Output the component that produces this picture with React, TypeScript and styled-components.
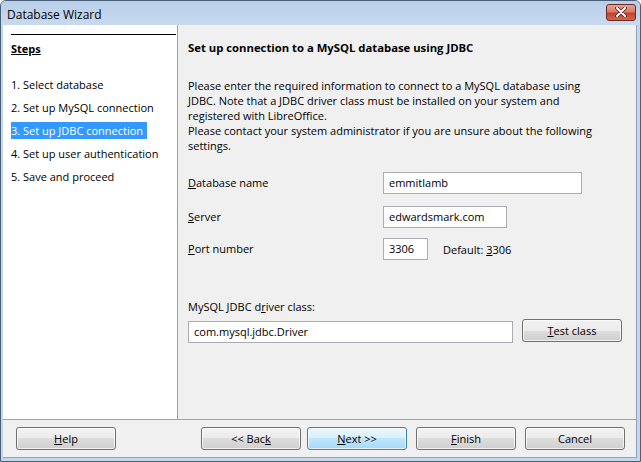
import React from 'react';
import styled, { createGlobalStyle } from 'styled-components';

const GlobalStyle = createGlobalStyle`
  html, body {
    margin: 0;
    padding: 0;
    background: #ffffff;
  }
  body {
    font-family: 'Open Sans', 'Noto Sans', sans-serif;
    font-size: 11px;
    color: #000000;
  }
`;

const Window = styled.div`
  width: 641px;
  height: 462px;
  box-sizing: border-box;
  border: 1px solid #4a5f78;
  border-radius: 6px 6px 0 0;
  background: #c3d7ed;
  display: flex;
  flex-direction: column;
  overflow: hidden;
`;

const TitleBar = styled.div`
  height: 24px;
  flex: none;
  display: flex;
  align-items: center;
  padding: 0 4px 0 6px;
  background: linear-gradient(#b8cfe9, #c7daef);
`;

const Title = styled.div`
  flex: 1;
  font-size: 12px;
  color: #000000;
  padding-top: 2px;
`;

const CloseButton = styled.div`
  width: 30px;
  height: 17px;
  margin-top: -2px;
  box-sizing: border-box;
  border: 1px solid #6b2b25;
  border-radius: 3px;
  background: linear-gradient(#e6a393 0%, #d97a66 45%, #c3432d 55%, #d0654c 100%);
  display: flex;
  align-items: center;
  justify-content: center;
`;

const Client = styled.div`
  flex: 1;
  margin: 0 3px 3px 2px;
  background: #f0f0f0;
  display: flex;
  flex-direction: column;
  border-right: 1px solid #8ea3bc;
  border-bottom: 1px solid #8ea3bc;
`;

const Main = styled.div`
  height: 394px;
  flex: none;
  display: flex;
  border-bottom: 1px solid #a0a0a0;
`;

const Sidebar = styled.div`
  width: 175px;
  flex: none;
  background: #ffffff;
  border-right: 1px solid #a0a0a0;
  padding: 9px 0 0 8px;
  box-sizing: border-box;
`;

const StepsHeader = styled.div`
  border-top: 1px solid #000000;
  margin-right: 1px;
  padding-top: 6px;
  font-weight: 700;
  text-decoration: underline;
  line-height: 16px;
`;

const StepList = styled.div`
  margin-top: 19px;
  display: flex;
  flex-direction: column;
  gap: 6px;
`;

const StepItem = styled.div<{ $active?: boolean }>`
  align-self: flex-start;
  line-height: 17px;
  height: 17px;
  white-space: nowrap;
  padding-right: 4px;
  background: ${p => (p.$active ? '#3399ff' : 'transparent')};
  color: ${p => (p.$active ? '#ffffff' : '#000000')};
`;

const Content = styled.div`
  flex: 1;
  padding: 15px 0 0 10px;
  display: flex;
  flex-direction: column;
`;

const Heading = styled.div`
  font-weight: 700;
  font-size: 11.3px;
  line-height: 16px;
`;

const Intro = styled.div`
  margin-top: 22px;
  line-height: 15px;
  white-space: nowrap;
`;

const Form = styled.div`
  margin-top: 19px;
  display: grid;
  grid-template-columns: 195px auto;
  align-items: center;
`;

const Label = styled.div<{ $gap: number }>`
  line-height: 16px;
  margin-top: ${p => p.$gap}px;
`;

const FieldCell = styled.div<{ $gap: number }>`
  display: flex;
  align-items: center;
  margin-top: ${p => p.$gap}px;
`;

const TextBox = styled.div<{ $width: number }>`
  width: ${p => p.$width}px;
  height: 22px;
  box-sizing: border-box;
  border: 1px solid #abadb3;
  background: #ffffff;
  padding-left: 5px;
  line-height: 20px;
  white-space: nowrap;
`;

const Hint = styled.div`
  margin-left: 15px;
`;

const DriverLabel = styled.div`
  margin-top: 39px;
  line-height: 16px;
`;

const DriverRow = styled.div`
  margin-top: 4px;
  display: flex;
  align-items: flex-start;
  gap: 9px;
`;

const DriverBox = styled(TextBox)`
  margin-top: 2px;
`;

const Button = styled.div<{ $focused?: boolean }>`
  width: 100px;
  height: 23px;
  box-sizing: border-box;
  border: 1px solid ${p => (p.$focused ? '#3c7fb1' : '#707070')};
  border-radius: 3px;
  background: ${p =>
    p.$focused
      ? 'linear-gradient(#eaf6fd 0%, #d9f0fc 50%, #bee6fd 50%, #a7d9f5 100%)'
      : 'linear-gradient(#f2f2f2 0%, #ebebeb 50%, #dddddd 50%, #cfcfcf 100%)'};
  box-shadow: inset 0 0 0 1px rgba(255, 255, 255, 0.7);
  display: flex;
  align-items: center;
  justify-content: center;
  line-height: 16px;
  flex: none;
`;

const ButtonBar = styled.div`
  flex: 1;
  display: flex;
  align-items: center;
  padding: 0 11px 0 13px;
`;

const ButtonGroup = styled.div<{ $gap: number }>`
  display: flex;
  gap: ${p => p.$gap}px;
`;

const Spacer = styled.div`
  flex: 1;
`;

const U = styled.span`
  text-decoration: underline;
`;

const steps = [
  '1. Select database',
  '2. Set up MySQL connection',
  '3. Set up JDBC connection',
  '4. Set up user authentication',
  '5. Save and proceed'
];

const App: React.FunctionComponent = () => {
  return (
    <>
      <GlobalStyle />
      <Window>
        <TitleBar>
          <Title>Database Wizard</Title>
          <CloseButton>
            <svg width='12' height='10' viewBox='0 0 12 10'>
              <path
                d='M2 1 L10 9 M10 1 L2 9'
                stroke='#5a1f18'
                strokeWidth='3.6'
                strokeLinecap='round'
              />
              <path
                d='M2 1 L10 9 M10 1 L2 9'
                stroke='#ffffff'
                strokeWidth='2'
                strokeLinecap='round'
              />
            </svg>
          </CloseButton>
        </TitleBar>
        <Client>
          <Main>
            <Sidebar>
              <StepsHeader>Steps</StepsHeader>
              <StepList>
                {steps.map((step, i) => (
                  <StepItem key={step} $active={i === 2}>
                    {step}
                  </StepItem>
                ))}
              </StepList>
            </Sidebar>
            <Content>
              <Heading>Set up connection to a MySQL database using JDBC</Heading>
              <Intro>
                Please enter the required information to connect to a MySQL database using
                <br />
                JDBC. Note that a JDBC driver class must be installed on your system and
                <br />
                registered with LibreOffice.
                <br />
                Please contact your system administrator if you are unsure about the following
                <br />
                settings.
              </Intro>
              <Form>
                <Label $gap={0}>
                  <U>D</U>atabase name
                </Label>
                <FieldCell $gap={0}>
                  <TextBox $width={199}>emmitlamb</TextBox>
                </FieldCell>
                <Label $gap={12}>
                  <U>S</U>erver
                </Label>
                <FieldCell $gap={12}>
                  <TextBox $width={124}>edwardsmark.com</TextBox>
                </FieldCell>
                <Label $gap={10}>
                  <U>P</U>ort number
                </Label>
                <FieldCell $gap={10}>
                  <TextBox $width={45}>3306</TextBox>
                  <Hint>
                    Default: <U>3</U>306
                  </Hint>
                </FieldCell>
              </Form>
              <DriverLabel>
                MySQL JDBC d<U>r</U>iver class:
              </DriverLabel>
              <DriverRow>
                <DriverBox $width={325}>com.mysql.jdbc.Driver</DriverBox>
                <Button>
                  <U>T</U>est class
                </Button>
              </DriverRow>
            </Content>
          </Main>
          <ButtonBar>
            <Button>
              <U>H</U>elp
            </Button>
            <Spacer />
            <ButtonGroup $gap={6}>
              <Button>
                &lt;&lt; Bac<U>k</U>
              </Button>
              <Button $focused>
                <U>N</U>ext &gt;&gt;
              </Button>
            </ButtonGroup>
            <ButtonGroup $gap={9} style={{ marginLeft: 9 }}>
              <Button>
                <U>F</U>inish
              </Button>
              <Button>Cancel</Button>
            </ButtonGroup>
          </ButtonBar>
        </Client>
      </Window>
    </>
  );
};

export default App;
